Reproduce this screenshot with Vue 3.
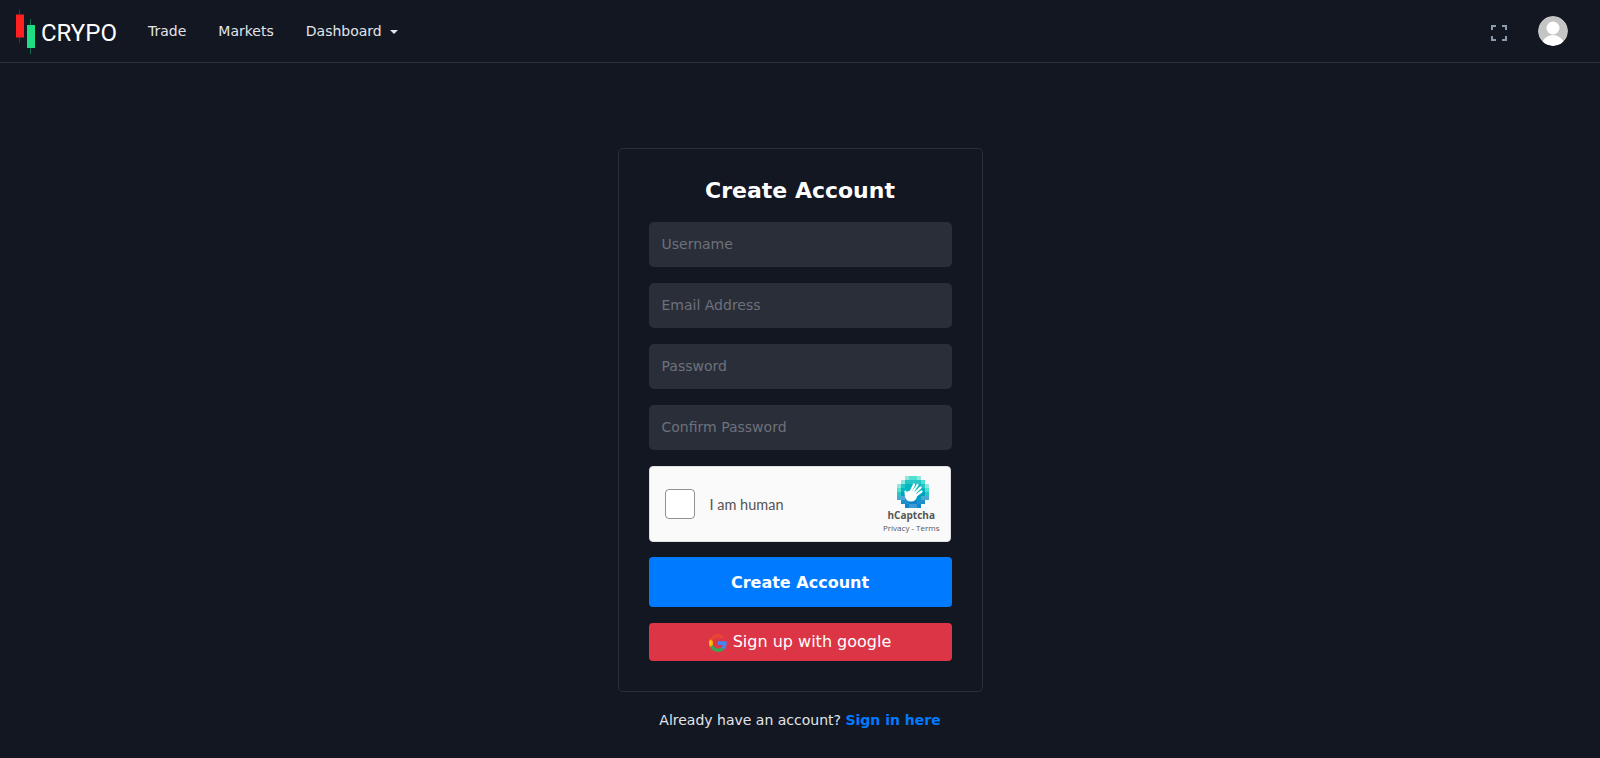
<script setup>
const navLinks = ['Trade', 'Markets']
const fields = [
  { placeholder: 'Username', type: 'text' },
  { placeholder: 'Email Address', type: 'email' },
  { placeholder: 'Password', type: 'password' },
  { placeholder: 'Confirm Password', type: 'password' }
]

// hCaptcha logo is a pixel grid, one string per row
const logoRows = [
  '..abba..',
  '.accccb.',
  'acddddca',
  'bddddddb',
  'ceeeeeec',
  'ffeeeeff',
  '.gghhgg.',
  '..hiih..'
]
const logoColors = {
  a: '#8fe8de',
  b: '#4de1d2',
  c: '#26c6c6',
  d: '#00b8bf',
  e: '#00a0c0',
  f: '#4aa8d4',
  g: '#1f8fcb',
  h: '#0f84c8',
  i: '#3d98d3'
}
const logoCells = []
logoRows.forEach((row, y) => {
  ;[...row].forEach((c, x) => {
    if (c !== '.') logoCells.push({ x: x * 4, y: y * 4, fill: logoColors[c] })
  })
})
</script>

<template>
  <div class="page">
    <header class="navbar">
      <a class="brand">
        <svg class="candles" width="20" height="45" viewBox="0 0 20 45">
          <rect x="3" y="0" width="1" height="34" fill="#6a2226" />
          <rect x="0" y="5.500" width="8" height="23" fill="#ff2020" />
          <rect x="14" y="10" width="1" height="35" fill="#11694c" />
          <rect x="11" y="16" width="8" height="23" fill="#20dc84" />
        </svg>
        <span class="brand-name">CRYPO</span>
      </a>
      <nav class="nav-links">
        <a v-for="link in navLinks" :key="link">{{ link }}</a>
        <a class="dropdown">Dashboard<i class="caret"></i></a>
      </nav>
      <div class="nav-right">
        <svg class="fullscreen" width="16" height="16" viewBox="0 0 16 16" fill="none" stroke="#8b9bae" stroke-width="2">
          <path d="M1 5V1H5M11 1H15V5M15 11V15H11M5 15H1V11" />
        </svg>
        <svg class="avatar" width="30" height="30" viewBox="0 0 30 30">
          <defs>
            <clipPath id="avatarClip"><circle cx="15" cy="15" r="15" /></clipPath>
          </defs>
          <g clip-path="url(#avatarClip)">
            <rect width="30" height="30" fill="#c4c4c4" />
            <circle cx="15" cy="12" r="6.500" fill="#fff" />
            <ellipse cx="15" cy="29" rx="11" ry="10" fill="#fff" />
          </g>
        </svg>
      </div>
    </header>

    <main class="content">
      <form class="card" @submit.prevent>
        <h1>Create Account</h1>
        <input
          v-for="field in fields"
          :key="field.placeholder"
          :type="field.type"
          :placeholder="field.placeholder"
        />
        <div class="captcha">
          <div class="captcha-check"></div>
          <span class="captcha-label">I am human</span>
          <div class="captcha-logo">
            <svg width="32" height="32" viewBox="0 0 32 32">
              <rect v-for="(cell, i) in logoCells" :key="i" :x="cell.x" :y="cell.y" width="4" height="4" :fill="cell.fill" />
              <g fill="none" stroke="#fff" stroke-width="2.200" stroke-linecap="round">
                <path d="M13.500 16L17 8.500" />
                <path d="M15.500 16.500L20.500 9" />
                <path d="M17.500 17.500L23.500 11.500" />
                <path d="M18.500 20L24.500 15.500" />
                <path d="M9 20.500L8.500 15.500" />
              </g>
              <ellipse cx="14" cy="20" rx="6" ry="5.500" fill="#fff" />
            </svg>
            <strong>hCaptcha</strong>
            <small>Privacy - Terms</small>
          </div>
        </div>
        <button class="btn-primary" type="submit">Create Account</button>
        <button class="btn-google" type="button">
          <svg width="18" height="18" viewBox="2 2 44 44">
            <path fill="#4285f4" d="M45.100 24.500c0-1.600-.1-3.100-.4-4.500H24v8.700h11.800c-.5 2.700-2.100 5-4.400 6.500l7 5.500c4.100-3.800 6.700-9.400 6.700-16.200z" />
            <path fill="#34a853" d="M24 46c5.900 0 10.900-2 14.400-5.300l-7-5.500c-1.900 1.300-4.400 2.100-7.400 2.100-5.700 0-10.500-3.800-12.200-9l-7.300 5.600C8.100 41 15.500 46 24 46z" />
            <path fill="#fbbc05" d="M11.800 28.300c-.4-1.300-.7-2.800-.7-4.300s.3-3 .7-4.300l-7.300-5.600C3 17 2 20.400 2 24s1 7 2.500 9.900l7.300-5.600z" />
            <path fill="#ea4335" d="M24 10.700c3.200 0 6.100 1.100 8.400 3.300l6.200-6.200C34.900 4.300 29.900 2 24 2 15.500 2 8.100 7 4.500 14.100l7.300 5.600c1.700-5.200 6.500-9 12.200-9z" />
          </svg>
          <span>Sign up with google</span>
        </button>
      </form>
      <p class="signin">Already have an account? <a>Sign in here</a></p>
    </main>
  </div>
</template>

<style>
html,
body {
  background: #131722;
}
</style>

<style scoped>
.page {
  min-height: 758px;
  background: #131722;
  font-family: "DejaVu Sans", sans-serif;
  color: #fff;
}

.navbar {
  display: flex;
  align-items: center;
  height: 62px;
  padding: 0 32px 0 16px;
  border-bottom: 1px solid #2a2e39;
}

.brand {
  display: flex;
  align-items: center;
  width: 132px;
}

.candles {
  flex: none;
  margin-top: 1px;
}

.brand-name {
  margin-left: 5px;
  margin-top: 3px;
  font-family: Roboto, sans-serif;
  font-size: 24px;
  color: #fff;
}

.nav-links {
  display: flex;
  align-items: center;
  gap: 32px;
  font-size: 14px;
  color: #e1e4ea;
}

.caret {
  display: inline-block;
  margin-left: 8px;
  vertical-align: 2px;
  border-top: 4px solid #e1e4ea;
  border-left: 4px solid transparent;
  border-right: 4px solid transparent;
}

.nav-right {
  display: flex;
  align-items: center;
  gap: 31px;
  margin-left: auto;
}

.fullscreen {
  margin-top: 3px;
}

.avatar {
  border-radius: 50%;
}

.content {
  display: flex;
  flex-direction: column;
  align-items: center;
  padding-top: 85px;
}

.card {
  display: flex;
  flex-direction: column;
  width: 365px;
  box-sizing: border-box;
  padding: 30px;
  border: 1px solid #2a2e39;
  border-radius: 5px;
}

h1 {
  margin: 0 0 19px;
  font-size: 22px;
  line-height: 24px;
  font-weight: 700;
  text-align: center;
}

input {
  height: 45px;
  box-sizing: border-box;
  margin-bottom: 16px;
  padding: 0 13px 2px;
  border: none;
  border-radius: 5px;
  background: #2a2e39;
  font-family: inherit;
  font-size: 14px;
  color: #fff;
}

input::placeholder {
  color: #6d717b;
}

.captcha {
  display: flex;
  align-items: center;
  width: 302px;
  height: 76px;
  box-sizing: border-box;
  padding: 0 10px 0 15px;
  margin-bottom: 15px;
  border: 1px solid #e0e0e0;
  border-radius: 4px;
  background: #fafafa;
}

.captcha-check {
  width: 30px;
  height: 30px;
  box-sizing: border-box;
  border: 1px solid #919191;
  border-radius: 4px;
  background: #fff;
}

.captcha-label {
  margin-left: 15px;
  font-family: Lato, sans-serif;
  font-size: 14.500px;
  color: #555;
}

.captcha-logo {
  display: flex;
  flex-direction: column;
  align-items: center;
  margin-left: auto;
  margin-bottom: 2px;
  color: #555;
}

.captcha-logo svg {
  margin: 2px 0 0 3px;
}

.captcha-logo strong {
  font-family: "Open Sans", sans-serif;
  font-size: 10px;
  line-height: 14px;
}

.captcha-logo small {
  font-family: "Open Sans", sans-serif;
  font-size: 8px;
  line-height: 11px;
}

button {
  border: none;
  border-radius: 4px;
  font-family: inherit;
  color: #fff;
}

.btn-primary {
  height: 50px;
  margin-bottom: 16px;
  background: #007bff;
  font-size: 16px;
  font-weight: 700;
}

.btn-google {
  display: flex;
  align-items: center;
  justify-content: center;
  gap: 6px;
  height: 38px;
  background: #dc3545;
  font-size: 16px;
}

.btn-google span {
  margin-bottom: 2px;
}

.btn-google svg {
  margin-top: 2px;
}

.signin {
  margin: 17px 0 0;
  font-size: 14px;
  line-height: 22px;
  color: #e1e4ea;
}

.signin a {
  font-weight: 700;
  color: #007bff;
}
</style>
